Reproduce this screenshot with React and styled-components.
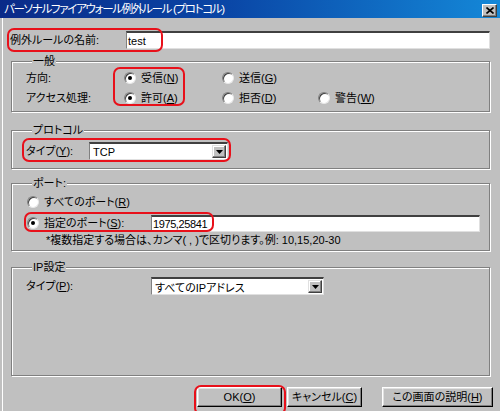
import React from 'react';
import styled, { createGlobalStyle } from 'styled-components';

const Global = createGlobalStyle`
  html, body { margin: 0; padding: 0; background: #c0c0c0; }
  body {
    font-family: "Liberation Sans", "Noto Sans CJK JP", sans-serif;
    font-size: 11px;
    color: #000;
    font-feature-settings: "palt";
  }
`;

const Window = styled.div`
  position: relative;
  width: 500px;
  height: 411px;
  background: #c0c0c0;
  display: flex;
  flex-direction: column;
  overflow: hidden;
`;

const TitleBar = styled.div`
  height: 18px;
  flex: none;
  display: flex;
  align-items: center;
  justify-content: space-between;
  padding: 0 3px 0 4px;
  background: linear-gradient(to right, #0a2a88 0%, #0a46a6 45%, #1488d8 100%);
  color: #fff;
  font-size: 11.5px;
  letter-spacing: -1.3px;
  line-height: 12px;
`;

const CloseBtn = styled.div`
  width: 13px;
  height: 11px;
  margin-top: 2px;
  background: #c0c0c0;
  border: 1px solid;
  border-color: #fff #404040 #404040 #fff;
  box-shadow: inset -1px -1px 0 #808080;
  display: flex;
  align-items: center;
  justify-content: center;
`;

const Body = styled.div`
  flex: 1;
  margin-left: 2px;
  border-left: 1px solid #fff;
  padding: 13px 10px 0 7px;
  display: flex;
  flex-direction: column;
`;

const NameRow = styled.div`
  display: flex;
  align-items: center;
  height: 18px;
`;

const Label = styled.span`
  width: ${(p) => p.$w || 'auto'};
  flex: none;
  white-space: nowrap;
  line-height: 12px;
`;

const TextInput = styled.div`
  box-sizing: border-box;
  width: ${(p) => p.$w || 'auto'};
  flex: ${(p) => (p.$w ? 'none' : '1')};
  height: ${(p) => p.$h || '18px'};
  background: #fff;
  border-top: 2px solid #404040;
  border-left: 1px solid #808080;
  border-right: 1px solid #e0e0e0;
  border-bottom: 1px solid #e0e0e0;
  padding: 0 1px;
  display: flex;
  align-items: center;
  font-size: 11px;
  letter-spacing: ${(p) => p.$ls || '0'};
  white-space: nowrap;
`;

const Group = styled.fieldset`
  box-sizing: border-box;
  margin: ${(p) => p.$mt} 0 0 1px;
  padding: ${(p) => p.$pad};
  min-width: 0;
  height: ${(p) => p.$h || 'auto'};
  border: 1px solid #808080;
  box-shadow: inset 1px 1px 0 #fff, 1px 1px 0 #fff;
`;

const Legend = styled.legend`
  margin-left: 6px;
  padding: 0 1px;
  background: #c0c0c0;
  line-height: 12px;
  font-size: 11px;
`;

const Row = styled.div`
  display: flex;
  align-items: center;
  height: ${(p) => p.$h || '20px'};
  margin-top: ${(p) => p.$mt || '0'};
`;

const RadioCell = styled.label`
  width: ${(p) => p.$w || 'auto'};
  flex: none;
  display: flex;
  align-items: center;
  gap: 5px;
  white-space: nowrap;
  line-height: 12px;
`;

const RadioMark = styled.span`
  position: relative;
  box-sizing: border-box;
  width: 12px;
  height: 12px;
  border-radius: 50%;
  background: #fff;
  border: 1px solid;
  border-color: #808080 #e8e8e8 #e8e8e8 #808080;
  box-shadow: inset 1px 1px 0 #404040;
  margin-left: ${(p) => p.$ml || '0'};
  &::after {
    content: '';
    display: ${(p) => (p.$on ? 'block' : 'none')};
    position: absolute;
    left: 3px;
    top: 3px;
    width: 4px;
    height: 4px;
    border-radius: 50%;
    background: #000;
  }
`;

const Select = styled(TextInput)`
  justify-content: space-between;
  padding: 0 1px 0 3px;
`;

const DropBtn = styled.span`
  box-sizing: border-box;
  width: 14px;
  height: 13px;
  background: #c0c0c0;
  border: 1px solid;
  border-color: #e0e0e0 #404040 #404040 #e0e0e0;
  box-shadow: inset -1px -1px 0 #808080, inset 1px 1px 0 #fff;
  display: flex;
  align-items: center;
  justify-content: center;
`;

const Note = styled.div`
  height: 14px;
  padding-left: 20px;
  display: flex;
  align-items: center;
  white-space: nowrap;
  line-height: 12px;
`;

const ButtonRow = styled.div`
  display: flex;
  justify-content: flex-end;
  margin: 11px -3px 0 0;
`;

const Button = styled.div`
  box-sizing: border-box;
  width: ${(p) => p.$w};
  margin-left: ${(p) => p.$ml || '0'};
  height: 20px;
  background: #c0c0c0;
  border: 1px solid;
  border-color: #fff #000 #000 #fff;
  box-shadow: inset -1px -1px 0 #808080, inset 1px 1px 0 #e0e0e0;
  display: flex;
  align-items: center;
  justify-content: center;
  white-space: nowrap;
  line-height: 12px;
`;

const Mark = styled.div`
  position: absolute;
  left: ${(p) => p.$x}px;
  top: ${(p) => p.$y}px;
  width: ${(p) => p.$w}px;
  height: ${(p) => p.$h}px;
  box-sizing: border-box;
  border: 2px solid #e8101a;
  border-radius: 7px;
  pointer-events: none;
`;

const Arrow = () => (
  <svg width="7" height="4" viewBox="0 0 7 4">
    <path d="M0 0h7L3.5 4z" fill="#000" />
  </svg>
);

const Radio = ({ on, w, children, ml }) => (
  <RadioCell $w={w}>
    <RadioMark $on={on} $ml={ml} />
    <span>{children}</span>
  </RadioCell>
);

export default function App() {
  return (
    <Window>
      <Global />
      <TitleBar>
        <span>パーソナルファイアウォール例外ルール (プロトコル)</span>
        <CloseBtn>
          <svg width="8" height="7" viewBox="0 0 8 7">
            <path d="M0.5 0.5l7 6M7.5 0.5l-7 6" stroke="#000" strokeWidth="1.6" />
          </svg>
        </CloseBtn>
      </TitleBar>
      <Body>
        <NameRow>
          <Label $w="116px">例外ルールの名前:</Label>
          <TextInput>test</TextInput>
        </NameRow>

        <Group $mt="6px" $pad="1px 0 3px 14px">
          <Legend>一般</Legend>
          <Row>
            <Label $w="98px">方向:</Label>
            <Radio on w="98px">受信(<u>N</u>)</Radio>
            <Radio w="96px">送信(<u>G</u>)</Radio>
          </Row>
          <Row>
            <Label $w="98px">アクセス処理:</Label>
            <Radio on w="98px">許可(<u>A</u>)</Radio>
            <Radio w="96px">拒否(<u>D</u>)</Radio>
            <Radio>警告(<u>W</u>)</Radio>
          </Row>
        </Group>

        <Group $mt="12px" $pad="5px 0 7px 14px">
          <Legend>プロトコル</Legend>
          <Row>
            <Label $w="63px">タイプ(<u>Y</u>):</Label>
            <Select $w="139px">
              <span>TCP</span>
              <DropBtn><Arrow /></DropBtn>
            </Select>
          </Row>
        </Group>

        <Group $mt="8px" $pad="3px 0 3px 14px">
          <Legend>ポート:</Legend>
          <Row>
            <Radio on={false} ml="1px">すべてのポート(<u>R</u>)</Radio>
          </Row>
          <Row $mt="1px">
            <Radio on w="125px" ml="1px">指定のポート(<u>S</u>):</Radio>
            <TextInput $w="329px" $h="17px" $ls="-0.4px">1975,25841</TextInput>
          </Row>
          <Note>*複数指定する場合は、カンマ( , )で区切ります。例: 10,15,20-30</Note>
        </Group>

        <Group $mt="10px" $pad="3px 0 0 14px" $h="115px">
          <Legend>IP設定</Legend>
          <Row>
            <Label $w="125px">タイプ(<u>P</u>):</Label>
            <Select $w="173px">
              <span>すべてのIPアドレス</span>
              <DropBtn><Arrow /></DropBtn>
            </Select>
          </Row>
        </Group>

        <ButtonRow>
          <Button $w="85px">OK(<u>O</u>)</Button>
          <Button $w="75px" $ml="5px">キャンセル(<u>C</u>)</Button>
          <Button $w="111px" $ml="20px">この画面の説明(<u>H</u>)</Button>
        </ButtonRow>
      </Body>

      <Mark $x={7} $y={28} $w={156} $h={24} />
      <Mark $x={113} $y={67} $w={72} $h={39} />
      <Mark $x={22} $y={138} $w={209} $h={24} />
      <Mark $x={24} $y={212} $w={190} $h={20} />
      <Mark $x={194} $y={385} $w={92} $h={30} />
    </Window>
  );
}
